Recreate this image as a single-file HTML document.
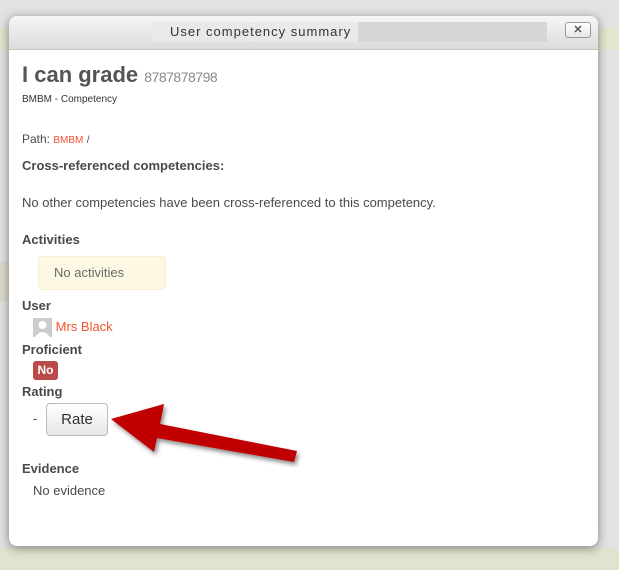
<!DOCTYPE html>
<html><head><meta charset="utf-8"><style>
*{margin:0;padding:0;box-sizing:border-box}
body{width:619px;height:570px;background:#e2e2e2;font-family:"Liberation Sans",Arial,sans-serif;position:relative;overflow:hidden;color:#4a4a4a}
.band{position:absolute;left:0;right:0;top:28px;height:22px;background:#e2e6cf}
.band2{position:absolute;left:0;width:12px;top:262px;height:40px;background:#ddd9cc}
.bot{position:absolute;left:0;right:0;top:548px;height:22px;background:#e0e3cf}
.dlg{position:absolute;left:9px;top:16px;width:589px;height:530px;background:#fff;border-radius:8px;box-shadow:0 2px 10px rgba(0,0,0,.45);overflow:hidden}
.hd{height:34px;background:linear-gradient(#f6f6f6,#dcdcdc);border-bottom:1px solid #c4c4c4;position:relative}
.ttl{position:absolute;left:143px;top:6px;width:395px;height:20px;background:#d6d6d6}
.ttl span{display:inline-block;background:#e9e9e9;height:20px;padding:0 7px 0 18px;font-size:13px;letter-spacing:1px;line-height:20px;color:#333}
.x{position:absolute;left:556px;top:6px;width:26px;height:16px;border:1px solid #999;border-radius:3px;background:linear-gradient(#fff,#e6e6e6);font-size:11px;font-weight:bold;text-align:center;line-height:14px;color:#555}
.c{position:absolute;left:13px}
h1{font-size:22px;font-weight:bold;color:#555}
h1 small{font-size:14px;font-weight:normal;color:#888;letter-spacing:-.5px}
.s{font-size:10px;color:#333}
.t{font-size:13px}
.b{font-size:13px;font-weight:bold;color:#4a4a4a}
.o{color:#f0542d}
.na{position:absolute;left:29px;top:240px;width:128px;height:34px;background:#fcf8e3;border:1px solid #fbeed5;border-radius:4px;font-size:13px;line-height:32px;padding-left:15px;color:#6a6a6a}
.av{display:inline-block;width:19px;height:19px;background:#ccc;vertical-align:middle;position:relative}
.no{position:absolute;left:24px;top:345px;width:25px;height:19px;background:#b94a48;border-radius:3px;color:#fff;font-weight:bold;font-size:12px;text-align:center;line-height:19px}
.rate{position:absolute;left:37px;top:387px;width:62px;height:33px;border:1px solid #bbb;border-radius:4px;background:linear-gradient(#fff,#e6e6e6);font-size:15px;text-align:center;line-height:31px;color:#333}
</style></head><body>
<div class="band"></div><div class="band2"></div><div class="bot"></div>
<div class="dlg">
<div class="hd"><div class="ttl"><span>User competency summary</span></div><div class="x">✕</div></div>
<h1 class="c" style="top:46px">I can grade <small>8787878798</small></h1>
<div class="c s" style="top:78px">BMBM - Competency</div>
<div class="c t" style="top:116px;font-size:12px">Path: <span class="o" style="font-size:10px">BMBM</span> <span style="font-size:10px">/</span></div>
<div class="c b" style="top:142px">Cross-referenced competencies:</div>
<div class="c t" style="top:179px">No other competencies have been cross-referenced to this competency.</div>
<div class="c b" style="top:216px">Activities</div>
<div class="na">No activities</div>
<div class="c b" style="top:282px">User</div>
<div class="c t" style="top:302px;left:24px"><span class="av"><svg width="19" height="19"><circle cx="9.5" cy="7" r="4" fill="#fff"/><path d="M2 19 Q9.5 9 17 19Z" fill="#fff"/></svg></span> <span class="o">Mrs Black</span></div>
<div class="c b" style="top:326px">Proficient</div>
<div class="no">No</div>
<div class="c b" style="top:368px">Rating</div>
<div class="c t" style="top:395px;left:24px">-</div>
<div class="rate">Rate</div>
<div class="c b" style="top:445px">Evidence</div>
<div class="c t" style="top:467px;left:24px">No evidence</div>
</div>
<svg style="position:absolute;left:0;top:0" width="619" height="570">
<defs><filter id="f"><feDropShadow dx="2" dy="3" stdDeviation="2" flood-opacity=".45"/></filter></defs>
<polygon filter="url(#f)" fill="#c00000" points="111,419 164,404 160,424 297,451 294,462 157,438 154,452"/>
</svg>
</body></html>
